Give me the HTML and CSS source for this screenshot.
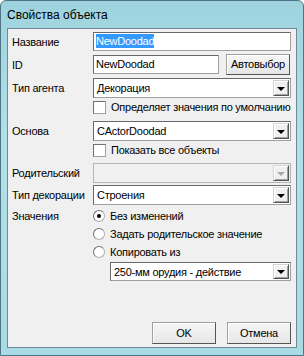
FILE: index.html
```html
<!DOCTYPE html>
<html lang="ru">
<head>
  <meta charset="UTF-8">
  <title>Свойства объекта</title>
  <link rel="stylesheet" href="styles.css">
</head>
<body>
  <div class="window">
    <div class="titlebar">Свойства объекта</div>
    <div class="client">
      <div class="row r-name">
        <span class="label">Название</span>
        <div class="edit"><span class="sel">NewDoodad</span></div>
      </div>
      <div class="row r-id">
        <span class="label">ID</span>
        <div class="edit edit-short">NewDoodad</div>
        <div class="btn btn-auto">Автовыбор</div>
      </div>
      <div class="row r-agent">
        <span class="label">Тип агента</span>
        <div class="combo">
          <span class="combo-text">Декорация</span>
          <span class="combo-btn"><span class="arrow"></span></span>
        </div>
      </div>
      <div class="row r-opt r-check1">
        <span class="check"></span>
        <span class="opt-text">Определяет значения по умолчанию</span>
      </div>
      <div class="row r-base">
        <span class="label">Основа</span>
        <div class="combo">
          <span class="combo-text">CActorDoodad</span>
          <span class="combo-btn"><span class="arrow"></span></span>
        </div>
      </div>
      <div class="row r-opt r-check2">
        <span class="check"></span>
        <span class="opt-text">Показать все объекты</span>
      </div>
      <div class="row r-parent">
        <span class="label">Родительский</span>
        <div class="combo combo-disabled">
          <span class="combo-text"></span>
          <span class="combo-btn"><span class="arrow"></span></span>
        </div>
      </div>
      <div class="row r-deco">
        <span class="label">Тип декорации</span>
        <div class="combo">
          <span class="combo-text">Строения</span>
          <span class="combo-btn"><span class="arrow"></span></span>
        </div>
      </div>
      <div class="row r-opt r-radio1">
        <span class="label">Значения</span>
        <span class="radio radio-on"></span>
        <span class="opt-text">Без изменений</span>
      </div>
      <div class="row r-opt r-radio">
        <span class="label"></span>
        <span class="radio"></span>
        <span class="opt-text">Задать родительское значение</span>
      </div>
      <div class="row r-opt r-radio">
        <span class="label"></span>
        <span class="radio"></span>
        <span class="opt-text">Копировать из</span>
      </div>
      <div class="row r-copy">
        <div class="combo combo-copy">
          <span class="combo-text">250-мм орудия - действие</span>
          <span class="combo-btn"><span class="arrow"></span></span>
        </div>
      </div>
      <div class="row r-buttons">
        <div class="btn btn-dlg btn-ok">OK</div>
        <div class="btn btn-dlg">Отмена</div>
      </div>
    </div>
  </div>
</body>
</html>
```

FILE: styles.css
```css
body {
  margin: 0;
  padding: 0;
  background-color: #fff;
  font-family: "Liberation Sans", Arial, sans-serif;
  font-size: 11px;
  letter-spacing: -0.25px;
  color: #000;
}
.window {
  width: 304px;
  height: 356px;
  box-sizing: border-box;
  border: 1px solid #4e7584;
  border-radius: 6px 6px 0 0;
  background: linear-gradient(to bottom, #9ed3de 0%, #b3e0e8 40%, #a9dbe5 100%);
  overflow: hidden;
}
.titlebar {
  height: 27px;
  line-height: 28px;
  padding-left: 6px;
  font-size: 12px;
  letter-spacing: 0;
  color: #000;
}
.client {
  margin: 0 6px;
  height: 320px;
  box-sizing: border-box;
  border: 1px solid #6f8b98;
  background-color: #f0f0f0;
  padding: 0 5px 0 4px;
}
.row {
  display: flex;
  align-items: center;
}
.label {
  width: 81px;
  flex: none;
  white-space: nowrap;
}
.r-name { margin-top: 3px; height: 19px; }
.r-id { margin-top: 3px; height: 21px; }
.r-agent { margin-top: 3px; height: 20px; }
.r-check1 { margin-top: 2px; height: 14px; }
.r-base { margin-top: 7px; height: 20px; }
.r-check2 { margin-top: 2px; height: 14px; }
.r-parent { margin-top: 6px; height: 20px; }
.r-deco { margin-top: 2px; height: 20px; }
.r-radio1 { margin-top: 4px; height: 14px; }
.r-radio { margin-top: 4px; height: 14px; }
.r-copy { margin-top: 3px; height: 19px; padding-left: 98px; }
.r-buttons {
  margin-top: 41px;
  height: 22px;
  justify-content: flex-end;
  gap: 11px;
}
.r-check1, .r-check2 { padding-left: 81px; }

/* edit boxes */
.edit {
  flex: 1;
  height: 19px;
  box-sizing: border-box;
  background-color: #fff;
  border: 1px solid #a0a0a0;
  border-top-color: #696969;
  border-left-color: #696969;
  padding: 1px 2px;
  line-height: 15px;
  white-space: nowrap;
}
.edit-short {
  flex: none;
  width: 126px;
}
.sel {
  background-color: #3399ff;
  color: #fff;
  padding: 1px 0;
}

/* buttons */
.btn {
  box-sizing: border-box;
  height: 21px;
  line-height: 19px;
  text-align: center;
  background: linear-gradient(to bottom, #f6f6f6, #e6e6e6);
  border: 1px solid #a0a0a0;
  border-right-color: #555;
  border-bottom-color: #555;
  box-shadow: inset 1px 1px 0 #fff;
}
.btn-auto {
  width: 64px;
  margin-left: 7px;
}
.btn-dlg {
  width: 64px;
  height: 22px;
  line-height: 20px;
}

/* combo boxes */
.combo {
  flex: 1;
  display: flex;
  height: 20px;
  box-sizing: border-box;
  background-color: #fff;
  border: 1px solid #a0a0a0;
  border-top-color: #696969;
  border-left-color: #696969;
  padding: 1px;
}
.combo-text {
  flex: 1;
  padding-left: 2px;
  line-height: 16px;
  white-space: nowrap;
  overflow: hidden;
}
.combo-btn {
  width: 16px;
  flex: none;
  box-sizing: border-box;
  background-color: #f0f0f0;
  border: 1px solid #d4d4d4;
  border-right-color: #555;
  border-bottom-color: #555;
  box-shadow: inset 1px 1px 0 #fff, inset -1px -1px 0 #a0a0a0;
  display: flex;
  align-items: center;
  justify-content: center;
}
.arrow {
  width: 0;
  height: 0;
  border-left: 4px solid transparent;
  border-right: 4px solid transparent;
  border-top: 4px solid #000;
  margin-top: 1px;
}
.combo-disabled {
  background-color: #f0f0f0;
  border-color: #b5b5b5;
}
.combo-disabled .arrow {
  border-top-color: #a8a8a8;
}
.combo-copy {
  height: 19px;
}

/* check and radio */
.check {
  width: 13px;
  height: 13px;
  box-sizing: border-box;
  background-color: #fff;
  border: 1px solid #a0a0a0;
  border-top-color: #707070;
  border-left-color: #707070;
  flex: none;
}
.radio {
  width: 12px;
  height: 12px;
  box-sizing: border-box;
  border-radius: 50%;
  background-color: #fff;
  border: 1px solid #b0b0b0;
  border-top-color: #707070;
  border-left-color: #707070;
  flex: none;
  display: flex;
  align-items: center;
  justify-content: center;
}
.radio-on::after {
  content: "";
  width: 4px;
  height: 4px;
  border-radius: 50%;
  background-color: #000;
}
.opt-text {
  margin-left: 5px;
  white-space: nowrap;
}
```
